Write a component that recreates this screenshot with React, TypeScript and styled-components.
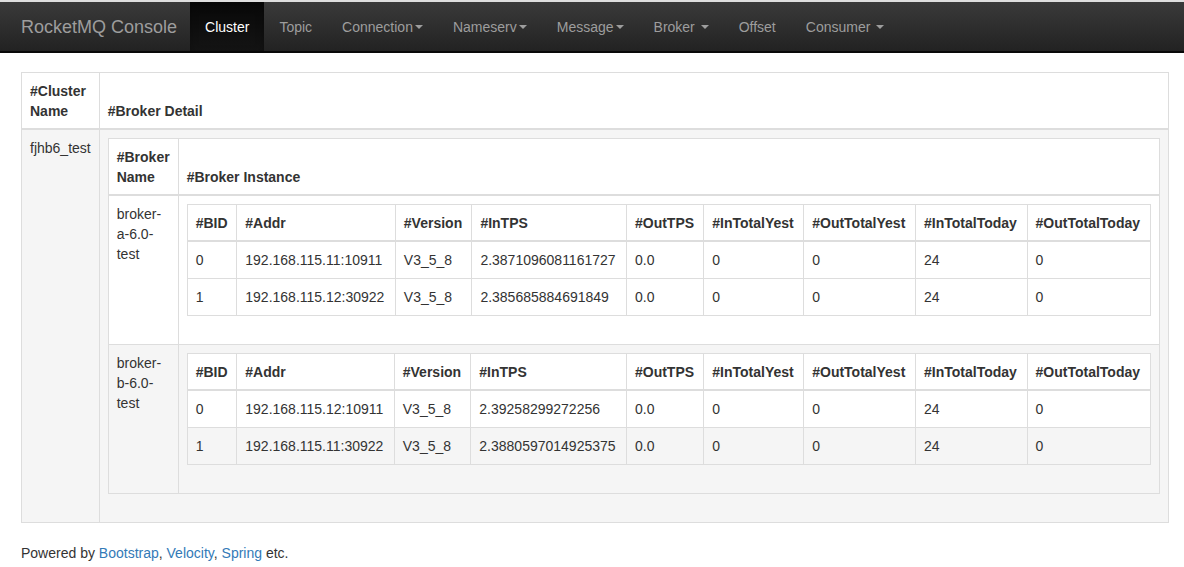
import React from 'react';
import styled, { createGlobalStyle } from 'styled-components';

const GlobalStyle = createGlobalStyle`
  * { box-sizing: border-box; }
  html, body {
    margin: 0;
    padding: 0;
    background: #fff;
  }
  body {
    font-family: "Liberation Sans", Arial, "Helvetica Neue", sans-serif;
    font-size: 14px;
    line-height: 20px;
    color: #333;
  }
`;

const Navbar = styled.nav`
  display: flex;
  align-items: stretch;
  height: 53px;
  border-top: 2px solid #dedede;
  border-bottom: 2px solid #080808;
  background-image: linear-gradient(to bottom, #3a3a3a 0%, #222 100%);
`;

const Brand = styled.a`
  display: flex;
  align-items: center;
  padding: 0 13px 0 21px;
  font-size: 18px;
  color: #9d9d9d;
  text-decoration: none;
`;

const NavList = styled.ul`
  display: flex;
  margin: 0;
  padding: 0;
  list-style: none;
`;

const NavItem = styled.li<{ $active?: boolean }>`
  display: flex;
  align-items: center;
  padding: 0 15px;
  color: ${(p) => (p.$active ? '#fff' : '#9d9d9d')};
  background-image: ${(p) =>
    p.$active ? 'linear-gradient(to bottom, #080808 0%, #141414 100%)' : 'none'};
  box-shadow: ${(p) => (p.$active ? 'inset 0 3px 9px rgba(0,0,0,0.25)' : 'none')};
  white-space: pre;
`;

const Caret = styled.span`
  display: inline-block;
  width: 0;
  height: 0;
  margin-left: 2px;
  border-top: 4px solid #9d9d9d;
  border-left: 4px solid transparent;
  border-right: 4px solid transparent;
  vertical-align: middle;
`;

const Main = styled.main`
  padding: 19px 15px 0 21px;
`;

const Table = styled.table<{ $nested?: boolean }>`
  width: 100%;
  border-collapse: collapse;
  border-spacing: 0;
  border: 1px solid #ddd;
  margin-bottom: 20px;
  background: ${(p) => (p.$nested ? '#fff' : 'transparent')};
`;

const Th = styled.th<{ $fit?: boolean }>`
  padding: 8px 8px 7px;
  text-align: left;
  vertical-align: bottom;
  font-weight: bold;
  border: 1px solid #ddd;
  border-bottom-width: 2px;
  white-space: ${(p) => (p.$fit ? 'normal' : 'nowrap')};
  width: ${(p) => (p.$fit ? '1px' : 'auto')};
`;

const Td = styled.td<{ $shade?: boolean; $fit?: boolean }>`
  padding: 8px;
  vertical-align: top;
  border: 1px solid #ddd;
  background: ${(p) => (p.$shade ? '#f5f5f5' : 'transparent')};
  white-space: ${(p) => (p.$fit ? 'normal' : 'nowrap')};
  width: ${(p) => (p.$fit ? '1px' : 'auto')};
`;

const Footer = styled.footer`
  padding: 0 0 0 21px;
`;

const Link = styled.a`
  color: #337ab7;
  text-decoration: none;
`;

type Instance = { bid: string; addr: string; version: string; inTps: string };

const brokers: { name: string; hover: boolean; rows: Instance[] }[] = [
  {
    name: 'broker-a-6.0-test',
    hover: false,
    rows: [
      { bid: '0', addr: '192.168.115.11:10911', version: 'V3_5_8', inTps: '2.3871096081161727' },
      { bid: '1', addr: '192.168.115.12:30922', version: 'V3_5_8', inTps: '2.385685884691849' },
    ],
  },
  {
    name: 'broker-b-6.0-test',
    hover: true,
    rows: [
      { bid: '0', addr: '192.168.115.12:10911', version: 'V3_5_8', inTps: '2.39258299272256' },
      { bid: '1', addr: '192.168.115.11:30922', version: 'V3_5_8', inTps: '2.3880597014925375' },
    ],
  },
];

const cols = ['#BID', '#Addr', '#Version', '#InTPS', '#OutTPS', '#InTotalYest', '#OutTotalYest', '#InTotalToday', '#OutTotalToday'];

function InstanceTable({ rows, hoverLast }: { rows: Instance[]; hoverLast: boolean }) {
  return (
    <Table $nested>
      <thead>
        <tr>
          {cols.map((c) => (
            <Th key={c}>{c}</Th>
          ))}
        </tr>
      </thead>
      <tbody>
        {rows.map((r, i) => {
          const shade = hoverLast && i === rows.length - 1;
          return (
            <tr key={r.bid}>
              <Td $shade={shade}>{r.bid}</Td>
              <Td $shade={shade}>{r.addr}</Td>
              <Td $shade={shade}>{r.version}</Td>
              <Td $shade={shade}>{r.inTps}</Td>
              <Td $shade={shade}>0.0</Td>
              <Td $shade={shade}>0</Td>
              <Td $shade={shade}>0</Td>
              <Td $shade={shade}>24</Td>
              <Td $shade={shade}>0</Td>
            </tr>
          );
        })}
      </tbody>
    </Table>
  );
}

export default function App() {
  const menu: { label: string; active?: boolean; caret?: boolean }[] = [
    { label: 'Cluster', active: true },
    { label: 'Topic' },
    { label: 'Connection', caret: true },
    { label: 'Nameserv', caret: true },
    { label: 'Message', caret: true },
    { label: 'Broker ', caret: true },
    { label: 'Offset' },
    { label: 'Consumer ', caret: true },
  ];

  return (
    <>
      <GlobalStyle />
      <Navbar>
        <Brand>RocketMQ Console</Brand>
        <NavList>
          {menu.map((m) => (
            <NavItem key={m.label} $active={m.active}>
              {m.label}
              {m.caret && <Caret />}
            </NavItem>
          ))}
        </NavList>
      </Navbar>
      <Main>
        <Table>
          <thead>
            <tr>
              <Th $fit>#Cluster Name</Th>
              <Th>#Broker Detail</Th>
            </tr>
          </thead>
          <tbody>
            <tr>
              <Td $shade $fit>fjhb6_test</Td>
              <Td $shade>
                <Table $nested>
                  <thead>
                    <tr>
                      <Th $fit>#Broker Name</Th>
                      <Th>#Broker Instance</Th>
                    </tr>
                  </thead>
                  <tbody>
                    {brokers.map((b) => (
                      <tr key={b.name}>
                        <Td $fit $shade={b.hover}>{b.name}</Td>
                        <Td $shade={b.hover}>
                          <InstanceTable rows={b.rows} hoverLast={b.hover} />
                        </Td>
                      </tr>
                    ))}
                  </tbody>
                </Table>
              </Td>
            </tr>
          </tbody>
        </Table>
      </Main>
      <Footer>
        Powered by <Link>Bootstrap</Link>, <Link>Velocity</Link>, <Link>Spring</Link> etc.
      </Footer>
    </>
  );
}
